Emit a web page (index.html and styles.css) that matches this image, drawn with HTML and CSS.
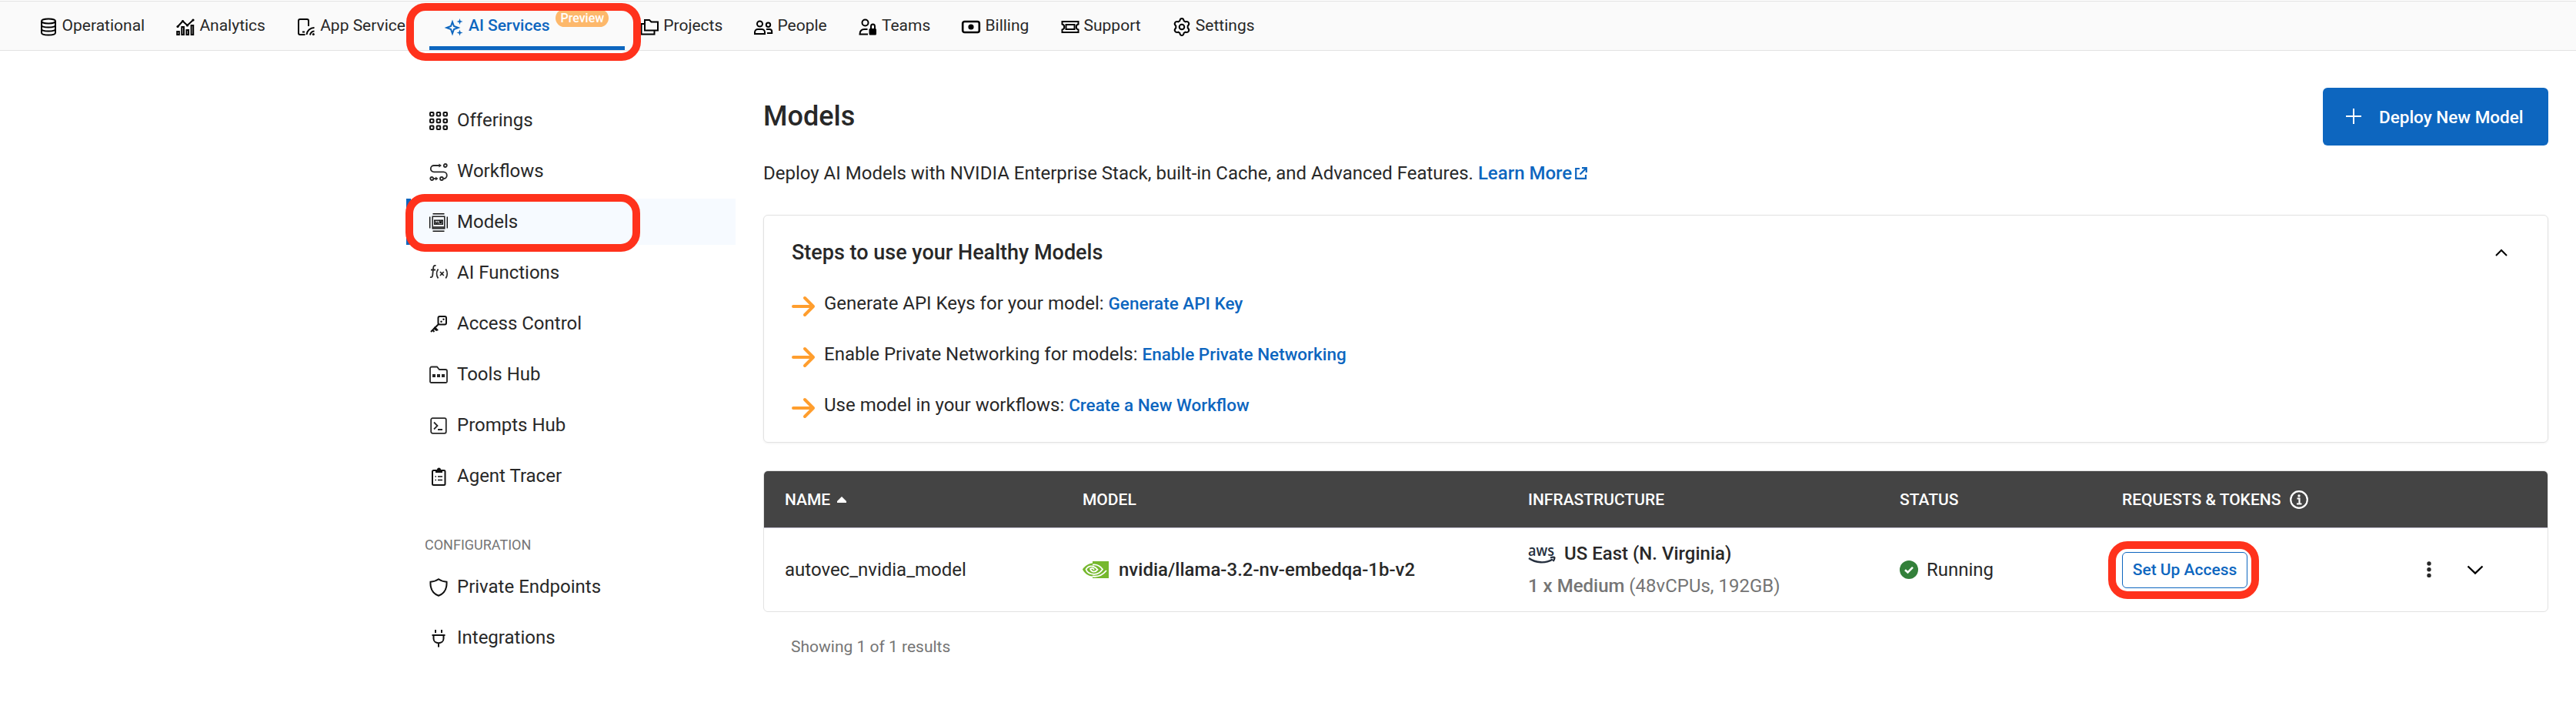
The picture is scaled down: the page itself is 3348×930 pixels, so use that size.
FILE: index.html
```html
<!DOCTYPE html>
<html lang="en">
<head>
<meta charset="utf-8">
<title>Models</title>
<link rel="stylesheet" href="styles.css">
</head>
<body>
<nav class="nav">
  <a class="tab"><svg class="icon" viewBox="0 0 24 24"><ellipse cx="12" cy="4.500" rx="9" ry="3"/><path d="M3 4.500v15c0 4 18 4 18 0v-15M3 9.500c0 4 18 4 18 0M3 14.500c0 4 18 4 18 0"/></svg>Operational</a>
  <a class="tab"><svg class="icon" viewBox="0 0 24 24"><rect x="1.200" y="18" width="2.600" height="4"/><rect x="7.300" y="12" width="2.600" height="10"/><rect x="13.400" y="16" width="2.600" height="6"/><rect x="19.600" y="10" width="2.600" height="12"/><path d="M2 11.500 8.500 4.500 14.500 10 22 3"/><g class="solid"><circle cx="2" cy="11.500" r="1.600"/><circle cx="8.500" cy="4.500" r="1.600"/><circle cx="14.500" cy="10" r="1.600"/><circle cx="22" cy="3" r="1.600"/></g></svg>Analytics</a>
  <a class="tab"><svg class="icon" viewBox="0 0 24 24"><path d="M10.500 22H4a2 2 0 0 1-2-2V4a2 2 0 0 1 2-2h9a2 2 0 0 1 2 2v7M7 18.500h3M12.500 22a10 10 0 0 1 10-9M17 22.500a6 6 0 0 1 5.500-5"/><circle class="solid" cx="21.300" cy="21.500" r="1.500"/></svg>App Services</a>
  <a class="tab tab-active"><svg class="icon" viewBox="0 0 24 24"><path d="M9 5.500 11 11l5.500 2-5.500 2-2 5.500L7 15l-5.500-2L7 11z"/><path class="solid" d="M18.500 1l1 3 3 1-3 1-1 3-1-3-3-1 3-1zM18.500 15.500l1 3 3 1-3 1-1 3-1-3-3-1 3-1z"/></svg>AI Services<span class="badge">Preview</span></a>
  <a class="tab"><svg class="icon" viewBox="0 0 24 24"><path d="M6 16.500V3h6l2.500 2.500H23v11zM6 8H1.500v13.500h17v-5"/></svg>Projects</a>
  <a class="tab"><svg class="icon" viewBox="0 0 24 24"><circle cx="7.500" cy="8" r="3.500"/><path d="M1 21v-2c0-2.500 2-4 4-4h5c2 0 4 1.500 4 4v2z"/><circle cx="18.500" cy="9.300" r="2.700"/><path d="M16 15h4c2 0 3.200 1.500 3.200 3.200V20H17"/></svg>People</a>
  <a class="tab"><svg class="icon" viewBox="0 0 24 24"><circle cx="8.500" cy="6.500" r="4"/><path d="M12 21.500H1.500c0-5 2-6.500 6-6.500h4M16 15v-3.500c0-4 5-4 5 0V15"/><rect class="solid" x="13.500" y="14" width="9.500" height="8.500" rx="1.500"/></svg>Teams</a>
  <a class="tab"><svg class="icon icon-heavy" viewBox="0 0 24 24"><rect x="1.200" y="5" width="21.600" height="14" rx="2.500"/><circle class="solid" cx="12" cy="12" r="3.600"/></svg>Billing</a>
  <a class="tab"><svg class="icon" viewBox="0 0 24 24"><path d="M1.500 5h21v3.500a3.600 3.600 0 0 0 0 7V19h-21v-3.500a3.600 3.600 0 0 0 0-7z"/><rect x="6.500" y="9" width="11" height="6"/></svg>Support</a>
  <a class="tab"><svg class="icon" viewBox="0 0 24 24"><circle cx="12" cy="12" r="3.300"/><path d="M12 1c2.300 0 2.300 1.300 2.700 3.200l2 1.100c1.900-.6 3-.9 4.200 1.200s.2 2.900-1.200 4.200v2.600c1.400 1.300 2.400 2.100 1.200 4.200s-2.300 1.800-4.200 1.200l-2 1.100C14.300 21.700 14.300 23 12 23s-2.300-1.300-2.700-3.200l-2-1.100c-1.900.6-3 .9-4.200-1.200s-.2-2.900 1.200-4.200v-2.600C2.900 9.400 1.900 8.600 3.100 6.500s2.300-1.800 4.200-1.200l2-1.100C9.700 2.300 9.700 1 12 1z"/></svg>Settings</a>
</nav>
<div class="layout">
  <aside class="side">
    <a class="item"><svg class="icon" viewBox="0 0 24 24"><g><rect x="1" y="1" width="4.500" height="4.500" rx="1"/><rect x="9.700" y="1" width="4.500" height="4.500" rx="1"/><rect x="18.500" y="1" width="4.500" height="4.500" rx="1"/><rect x="1" y="9.700" width="4.500" height="4.500" rx="1"/><rect x="9.700" y="9.700" width="4.500" height="4.500" rx="1"/><rect x="18.500" y="9.700" width="4.500" height="4.500" rx="1"/><rect x="1" y="18.500" width="4.500" height="4.500" rx="1"/><rect x="9.700" y="18.500" width="4.500" height="4.500" rx="1"/><rect x="18.500" y="18.500" width="4.500" height="4.500" rx="1"/></g></svg>Offerings</a>
    <a class="item"><svg class="icon icon-soft" viewBox="0 0 24 24"><path d="M14 4H6a4.200 4.200 0 0 0 0 8.400h12.500a4.200 4.200 0 0 1 0 8.600"/><circle cx="20.800" cy="4" r="2"/><circle cx="3.300" cy="21" r="2"/><circle cx="16" cy="21" r="2"/><path d="M5.500 21h3"/><path class="solid" d="M12.500 1.500 16 4l-3.500 2.500zM8 18.500l3.500 2.500L8 23.500z"/></svg>Workflows</a>
    <a class="item item-active"><svg class="icon icon-thin" viewBox="0 0 24 24"><rect x="4.200" y="4.200" width="15.600" height="15.600"/><path d="M4.500 .7h15M4.500 23.300h15M.7 4.500v15M23.300 4.500v15M5 18h14"/><rect x="6.700" y="9.200" width="10.600" height="5"/><path d="M8.500 10.500v2.500h1.500M11 10.500v2.500h1.200M13.500 13v-2.500l1 1.500 1-1.500V13"/></svg>Models</a>
    <a class="item"><svg class="icon icon-fn" viewBox="0 0 24 24"><path d="M8.500 2C5.500 1.300 5.300 3.500 5.100 5.500L4.300 14c-.2 2.600-1 3.600-3.300 3M2 7.500h6M11.500 6.500c-2.500 3.500-2.500 8.500 0 12M21.300 6.500c2.500 3.500 2.500 8.500 0 12M14 10l4.800 5M18.800 10 14 15"/></svg>AI Functions</a>
    <a class="item"><svg class="icon" viewBox="0 0 24 24"><rect x="11.500" y="2" width="10.500" height="10.500" rx="2"/><path d="M12 12 2 22M4 19.500l2.500 2.500M7 16.500l3 3"/><path class="solid" d="M7 15l5 5-3 1-4-3z"/><g class="solid"><circle cx="18.500" cy="5.800" r="1.200"/><circle cx="15.500" cy="8.800" r="1.200"/></g></svg>Access Control</a>
    <a class="item"><svg class="icon icon-soft" viewBox="0 0 24 24"><path d="M1 20.500V3.500a2 2 0 0 1 2-2h7l3 3.500h8a2 2 0 0 1 2 2v13.500a1.500 1.500 0 0 1-1.500 1.500h-19A1.500 1.500 0 0 1 1 20.500z"/><path class="solid" d="M4 11h4v4H4zM10 11h4v4h-4zM16 11h4v4h-4z"/></svg>Tools Hub</a>
    <a class="item"><svg class="icon icon-soft" viewBox="0 0 24 24"><rect x="2.200" y="2.200" width="19.600" height="19.600" rx="2"/><path d="M6 7.500l4.500 4.500L6 16.500M11 17h6"/></svg>Prompts Hub</a>
    <a class="item"><svg class="icon" viewBox="0 0 24 24"><rect x="4" y="4" width="16.500" height="19" rx="1.500"/><path class="solid" d="M8 3h2c0-3.500 5-3.500 5 0h2v4H8z"/><path d="M7.500 12h1.500M11 12h6M7.500 16.500h1.500M11 16.500h6" stroke-width="1.300"/></svg>Agent Tracer</a>
    <h2 class="group">CONFIGURATION</h2>
    <a class="item"><svg class="icon" viewBox="0 0 24 24"><path d="M12 1.300c3.500 2.500 6.500 3.300 10.500 3.500.5 8-1.500 14.500-10.500 18C3 19.300 1 12.800 1.500 4.800 5.500 4.600 8.500 3.800 12 1.300z"/></svg>Private Endpoints</a>
    <a class="item"><svg class="icon" viewBox="0 0 24 24"><path d="M8 1v4M16 1v4M3.500 8h17M5.500 8v4.500c0 7.500 13 7.500 13 0V8M12 18v5.500"/></svg>Integrations</a>
  </aside>
  <main class="main">
    <header class="head">
      <div>
        <h1 class="title">Models</h1>
        <p class="lead">Deploy AI Models with NVIDIA Enterprise Stack, built-in Cache, and Advanced Features. <a class="lead-link">Learn More<svg class="external" viewBox="0 0 16 16"><path d="M6 2H1.200v12.800H14V10M9 1.200H14.800V7M14.500 1.500 6.500 9.500"/></svg></a></p>
      </div>
      <button class="deploy"><svg class="plus" viewBox="0 0 20 20"><path d="M10 0v20M0 10h20"/></svg>Deploy New Model</button>
    </header>
    <section class="steps">
      <div class="steps-head"><h3 class="steps-title">Steps to use your Healthy Models</h3><svg class="collapse" viewBox="0 0 16 9"><path d="M1 8l7-7 7 7"/></svg></div>
      <p class="step"><svg class="arrow" viewBox="0 0 30 26"><path d="M2 13h26M17 2l11 11-11 11"/></svg><span>Generate API Keys for your model: <a class="link">Generate API Key</a></span></p>
      <p class="step"><svg class="arrow" viewBox="0 0 30 26"><path d="M2 13h26M17 2l11 11-11 11"/></svg><span>Enable Private Networking for models: <a class="link">Enable Private Networking</a></span></p>
      <p class="step"><svg class="arrow" viewBox="0 0 30 26"><path d="M2 13h26M17 2l11 11-11 11"/></svg><span>Use model in your workflows: <a class="link">Create a New Workflow</a></span></p>
    </section>
    <section class="table">
      <div class="row row-head">
        <div>NAME<svg class="sort" viewBox="0 0 12 8"><path d="M6 0l6 6v2H0V6z"/></svg></div>
        <div>MODEL</div><div>INFRASTRUCTURE</div><div>STATUS</div>
        <div>REQUESTS &amp; TOKENS<svg class="info" viewBox="0 0 24 24"><circle cx="12" cy="12" r="10.800"/><path d="M9.500 10.500H12.500V17.500M9 17.500h6.500"/><circle class="dot" cx="12" cy="7" r="1.700"/></svg></div>
      </div>
      <div class="row row-body">
        <div>autovec_nvidia_model</div>
        <div class="strong"><svg class="nvidia" viewBox="0 0 34 22"><path class="nv-bg" d="M13 0h21v22H13v-2.500C7 19.500 2 15 0 10.500 3 6 8 2.700 13 2.500z"/><path class="nv-line" d="M13 4.600c6-.8 10.500 2.400 13 6-3 4.200-7.500 6.500-11.500 6.200C9 16.500 5.500 13.500 4.500 10.500 7 6.800 11 6 14 6.800c3 .8 4.500 2.700 5.500 4-2 2.400-4 3.300-6.200 2.500-2-.8-3-2-3.300-3.300 1.700-1.500 4-1 5 1M31 12c-5 6-12 8.500-18 7.500"/></svg>nvidia/llama-3.2-nv-embedqa-1b-v2</div>
        <div class="infra">
          <div class="region"><svg class="aws" viewBox="0 0 36 24"><text x="0" y="12.500" textLength="34" lengthAdjust="spacingAndGlyphs">aws</text><path d="M1 16c9 6.500 22 7 31 1.500M29 15.300c3-.8 5.500-.8 5.500 0s-.5 3-2 4.700"/></svg>US East (N. Virginia)</div>
          <div class="size"><b>1 x Medium</b> (48vCPUs, 192GB)</div>
        </div>
        <div><svg class="check" viewBox="0 0 24 24"><circle cx="12" cy="12" r="12"/><path d="M7 12.300l3.500 3.200L17 8.800"/></svg>Running</div>
        <div class="actions"><span class="mark"><button class="access">Set Up Access</button></span>
          <svg class="more" viewBox="0 0 6 22"><circle cx="3" cy="3" r="2.700"/><circle cx="3" cy="10.700" r="2.700"/><circle cx="3" cy="18.400" r="2.700"/></svg>
          <svg class="expand" viewBox="0 0 22 12"><path d="M1.500 1.500 11 10.500l9.500-9"/></svg></div>
      </div>
    </section>
    <p class="count">Showing 1 of 1 results</p>
  </main>
</div>
</body>
</html>
```
FILE: styles.css
```css
*, *::before, *::after { box-sizing: border-box; margin: 0; }
body { background: #fff; color: #282828; font: 24px/36px Roboto, sans-serif; padding-top: 1px; }
svg { flex: none; fill: none; stroke: currentColor; overflow: visible; }
button { font-family: inherit; font-weight: 500; }
.icon { width: 24px; height: 24px; color: #111; stroke-width: 2; }
.icon-heavy { stroke-width: 2.6; }
.icon-thin { stroke-width: 1.4; }
.icon-soft, .icon-fn { color: #282828; stroke-width: 1.8; }
.solid { fill: currentColor; stroke: none; }

.nav { display: flex; height: 65px; padding-left: 30px; background: #fafafa; border-top: 1px solid #e2e2e2; border-bottom: 1px solid #e2e2e2; }
.tab { position: relative; display: flex; align-items: center; gap: 6px; padding: 0 20.6px 2px; font-size: 21px; white-space: nowrap; }
.tab .icon { margin-top: 5px; color: #000; }
.tab-active { padding-top: 5px; color: #0d66bf; font-weight: 500; line-height: 30px; border-bottom: 5px solid #0d66bf; }
.tab-active .icon { color: #0d66bf; margin-top: 5px; }
.badge { align-self: flex-start; margin: 5px 0 0 2px; padding: 0 6px; height: 23px; border-radius: 12px; background: #fdb86b; color: #fff; font-size: 16px; line-height: 23px; }
.tab-active::after, .item-active::after, .mark::after { content: ""; position: absolute; z-index: 1; border: 10px solid #ff321c; border-radius: 25px; }
.tab-active::after { left: -30px; width: 305px; top: 2px; height: 75px; }

.layout { display: flex; padding: 48px 36px 0 528px; }
.side { width: 428px; flex: none; display: flex; flex-direction: column; gap: 6px; padding-top: 12px; }
.item { position: relative; display: flex; align-items: center; gap: 12px; height: 60px; padding-left: 30px; }
.item .icon { margin-top: 2px; }
.item-active { background: #f6faff; border-left: 6px solid #0d66bf; padding-left: 24px; }
.item-active::after { left: -7px; top: -6px; width: 305px; height: 75px; }
.group { margin: 42px 0 6px; padding-left: 24px; font-size: 18px; font-weight: 400; line-height: 24px; color: #757575; }

.main { flex: 1; margin-left: 36px; }
.head { display: flex; justify-content: space-between; align-items: flex-start; }
.title { margin-top: 15px; font-size: 36px; line-height: 44px; font-weight: 500; }
.lead { margin-top: 34px; line-height: 36px; }
.lead-link, .link { color: #0d66bf; font-weight: 500; }
.link { font-size: 22.5px; }
.external { width: 16px; height: 16px; margin-left: 4px; stroke-width: 2.2; }
.deploy { display: flex; align-items: center; gap: 23px; width: 293px; height: 75px; padding: 0 0 0 30px; border: 0; border-radius: 6px; background: #0d66bf; color: #fff; font-size: 22.5px; }
.plus { width: 20px; height: 20px; stroke-width: 2; margin-top: -2px; }

.steps { height: 296px; margin-top: 36px; padding: 29px 36px 0; border: 1px solid #e2e2e2; border-radius: 6px; box-shadow: 0 1px 3px rgba(0,0,0,.06); }
.steps-head { display: flex; align-items: center; justify-content: space-between; height: 38px; margin-bottom: 29px; padding-right: 16px; }
.steps-title { font-size: 27px; font-weight: 500; }
.collapse { width: 16px; height: 9px; color: #000; stroke-width: 2; }
.step { display: flex; align-items: center; gap: 12px; height: 36px; margin-bottom: 30px; }
.arrow { width: 30px; height: 26px; margin-top: 8px; color: #ff9e2e; stroke-width: 4; stroke-linecap: round; stroke-linejoin: round; }

.table { margin-top: 36px; border: 1px solid #e2e2e2; border-radius: 6px; overflow: hidden; }
.row { display: grid; grid-template-columns: 387px 579px 483px 289px 1fr; }
.row > div { display: flex; align-items: center; padding-left: 27px; }
.row-head { height: 74px; background: #444; border-bottom: 1px solid #b9b5c6; color: #fff; font-size: 21px; font-weight: 500; }
.row-body { height: 108px; }
.sort { width: 12px; height: 8px; margin-left: 9px; fill: #fff; stroke: none; }
.info { width: 24px; height: 24px; margin-left: 12px; stroke-width: 2.2; }
.dot { fill: #fff; stroke: none; }
.strong, .region, .size b { font-weight: 500; }
.nvidia { width: 34px; height: 22px; margin-right: 13px; }
.nv-bg { fill: #76b82e; stroke: none; }
.nv-line { stroke: #fff; stroke-width: 1.8; }
.row .infra { flex-direction: column; align-items: flex-start; justify-content: center; gap: 6px; }
.region { display: flex; align-items: center; }
.aws { width: 36px; height: 24px; margin: 4px 11px 0 0; color: #252f3e; stroke-width: 2.3; }
.aws text { fill: #252f3e; stroke: none; font: 600 19px "Open Sans", sans-serif; }
.size { color: #757575; }
.check { width: 24px; height: 24px; margin-right: 11px; stroke: none; fill: #33803a; }
.check path { fill: none; stroke: #fff; stroke-width: 2.6; }
.mark { position: relative; }
.mark::after { left: -18px; right: -15px; top: -14px; bottom: -14px; }
.access { display: block; width: 163px; height: 47px; padding: 0; border: 1.5px solid #0d66bf; border-radius: 6px; background: #fff; color: #0d66bf; font-size: 21px; }
.more { width: 6px; height: 22px; margin-left: 233px; fill: #282828; stroke: none; }
.expand { width: 22px; height: 12px; margin-left: 46px; color: #000; stroke-width: 2.4; }
.count { margin: 27px 0 0 36px; font-size: 21px; color: #757575; }
```
